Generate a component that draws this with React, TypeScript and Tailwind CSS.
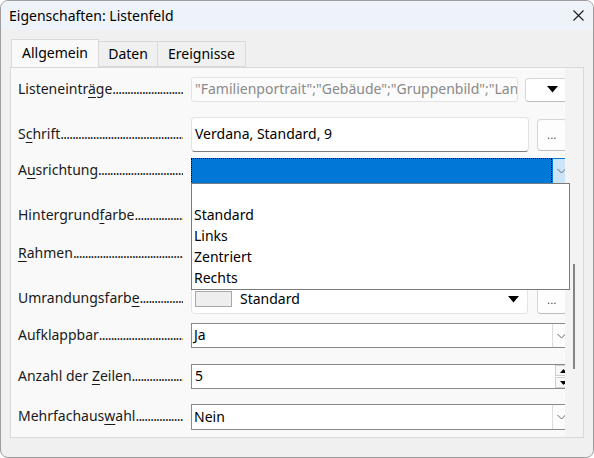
import type { ReactNode } from 'react';

const font = { fontFamily: '"Noto Sans", "Open Sans", sans-serif' };

function Leader({ children }: { children: ReactNode }) {
  return (
    <div className="flex w-[165px] shrink-0 items-center overflow-hidden whitespace-nowrap pb-[3px] text-[14px] leading-[19px] text-[#1a1a1a]">
      <span>{children}</span>
      <span className="min-w-0 flex-1 overflow-hidden tracking-[-0.8px]">{'.'.repeat(100)}</span>
    </div>
  );
}

function U({ children }: { children: ReactNode }) {
  return <span className="underline decoration-1 underline-offset-[3px]">{children}</span>;
}

function Chevron() {
  return (
    <svg width="9" height="6" viewBox="0 0 9 6">
      <path d="M0.5 1 L4.5 5 L8.5 1" fill="none" stroke="#6b6b6b" strokeWidth="1" />
    </svg>
  );
}

function Triangle() {
  return (
    <svg width="11" height="7" viewBox="0 0 11 7">
      <path d="M0 0 H11 L5.5 6.5 Z" fill="#000" />
    </svg>
  );
}

function Dots() {
  return <span className="text-[10px] leading-none tracking-[0.5px] text-[#333]">...</span>;
}

export default function App() {
  return (
    <div style={font} className="relative h-[458px] w-[594px] overflow-hidden bg-white">
      <div className="flex h-[458px] w-[594px] flex-col overflow-hidden rounded-[8px] border border-[#9e9e9e] bg-[#f0f0f0]">
        {/* Title bar */}
        <div className="flex h-[29px] shrink-0 items-center justify-between bg-[#eef3f9] pl-[8px] pr-[9px]">
          <span className="pb-[1px] text-[14px] text-black">Eigenschaften: Listenfeld</span>
          <svg width="11" height="11" viewBox="0 0 11 11">
            <path d="M0.5 0.5 L10.5 10.5 M10.5 0.5 L0.5 10.5" stroke="#1a1a1a" strokeWidth="1.1" />
          </svg>
        </div>

        {/* Tabs */}
        <div className="mt-[10px] flex h-[27px] shrink-0 items-end pl-[10px] text-[14px] text-black">
          <div className="relative z-10 flex h-[28px] w-[88px] items-center justify-center border border-b-0 border-[#d9d9d9] bg-[#f9f9f9] pb-[2px]">
            Allgemein
          </div>
          <div className="flex h-[26px] w-[59px] items-center justify-center border border-l-0 border-[#d9d9d9] bg-[#f0f0f0] pb-[1px]">
            Daten
          </div>
          <div className="flex h-[26px] w-[88px] items-center justify-center border border-l-0 border-[#d9d9d9] bg-[#f0f0f0] pb-[1px]">
            Ereignisse
          </div>
        </div>

        {/* Panel */}
        <div className="ml-[9px] flex h-[371px] w-[574px] shrink-0 border border-[#d9d9d9] bg-[#f9f9f9]">
          <div className="flex w-[554px] flex-col overflow-hidden pl-[7px] text-[14px] text-black">
            {/* Listeneinträge */}
            <div className="mt-[9px] flex h-[25px] items-center">
              <Leader>
                Listeneintr<U>ä</U>ge
              </Leader>
              <div className="ml-[8px] flex h-[25px] w-[327px] shrink-0 items-center overflow-hidden whitespace-nowrap rounded-[3px] border border-[#e3e3e3] bg-[#fbfbfb] pb-[2px] pl-[3px] text-[#8a8a8a]">
                "Familienportrait";"Gebäude";"Gruppenbild";"Landschaft"
              </div>
              <div className="ml-[7px] flex h-[24px] w-[55px] shrink-0 items-center justify-center rounded-[4px] border border-[#d6d6d6] border-b-[#bdbdbd] bg-white">
                <Triangle />
              </div>
            </div>

            {/* Schrift */}
            <div className="mt-[15px] flex h-[35px] items-center">
              <Leader>
                S<U>c</U>hrift
              </Leader>
              <div className="ml-[8px] flex h-[35px] w-[338px] shrink-0 items-center rounded-[4px] border border-[#e3e3e3] border-b-[#7f7f7f] bg-white pb-[2px] pl-[3px]">
                Verdana, Standard, 9
              </div>
              <div className="ml-[8px] flex h-[32px] w-[30px] shrink-0 items-center justify-center rounded-[4px] border border-[#d6d6d6] border-b-[#bdbdbd] bg-[#fdfdfd]">
                <Dots />
              </div>
            </div>

            {/* Ausrichtung */}
            <div className="mt-[6px] flex h-[26px] items-center">
              <Leader>
                A<U>u</U>srichtung
              </Leader>
              <div className="ml-[8px] flex h-[26px] w-[380px] shrink-0">
                <div className="h-[26px] w-[361px] bg-[#0078d7] outline-1 -outline-offset-1 outline-dotted outline-black" />
                <div className="flex h-[26px] w-[18px] items-center justify-center border border-[#0078d7] bg-[#cce4f7]">
                  <Chevron />
                </div>
              </div>
            </div>

            {/* Hintergrundfarbe (covered by popup) */}
            <div className="mt-[19px] flex h-[26px] items-center">
              <Leader>
                Hintergrund<U>f</U>arbe
              </Leader>
              <div className="ml-[8px] h-[26px] w-[337px] shrink-0 rounded-[4px] border border-[#e3e3e3] bg-white" />
            </div>

            {/* Rahmen (covered by popup) */}
            <div className="mt-[12px] flex h-[26px] items-center">
              <Leader>
                <U>R</U>ahmen
              </Leader>
              <div className="ml-[8px] h-[26px] w-[380px] shrink-0 border border-[#8a8a8a] bg-white" />
            </div>

            {/* Umrandungsfarbe */}
            <div className="mt-[17px] flex h-[30px] items-center">
              <Leader>
                Umrandungsfarb<U>e</U>
              </Leader>
              <div className="ml-[8px] flex h-[30px] w-[337px] shrink-0 items-center rounded-[4px] border border-[#e3e3e3] bg-white pl-[3px] pr-[8px]">
                <div className="h-[16px] w-[37px] border border-[#a8a8a8] bg-[#eeeeee]" />
                <span className="ml-[8px] flex-1 pb-[2px]">Standard</span>
                <Triangle />
              </div>
              <div className="ml-[9px] flex h-[29px] w-[30px] shrink-0 items-center justify-center self-end rounded-[4px] border border-[#d6d6d6] border-b-[#bdbdbd] bg-[#fdfdfd]">
                <Dots />
              </div>
            </div>

            {/* Aufklappbar */}
            <div className="mt-[9px] flex h-[25px] items-center">
              <Leader>Aufklappbar</Leader>
              <div className="ml-[8px] flex h-[25px] w-[380px] shrink-0 items-center border border-[#8a8a8a] bg-white pl-[2px]">
                <span className="flex-1 pb-[2px]">Ja</span>
                <div className="flex h-[23px] w-[18px] items-center justify-center border-l border-[#dcdcdc] bg-[#fcfcfc]">
                  <Chevron />
                </div>
              </div>
            </div>

            {/* Anzahl der Zeilen */}
            <div className="mt-[16px] flex h-[25px] items-center">
              <Leader>
                Anzahl der <U>Z</U>eilen
              </Leader>
              <div className="ml-[8px] flex h-[25px] w-[380px] shrink-0 items-center border-y border-l border-[#8a8a8a] bg-white pl-[3px]">
                <span className="flex-1 pb-[2px]">5</span>
                <div className="flex h-[23px] w-[16px] flex-col">
                  <div className="flex h-[11px] items-center justify-center border border-[#cfcfcf] bg-[#f7f7f7]">
                    <svg width="7" height="4" viewBox="0 0 7 4">
                      <path d="M0 4 H7 L3.5 0 Z" fill="#000" />
                    </svg>
                  </div>
                  <div className="mt-[1px] flex h-[11px] items-center justify-center border border-[#cfcfcf] bg-[#f7f7f7]">
                    <svg width="7" height="4" viewBox="0 0 7 4">
                      <path d="M0 0 H7 L3.5 4 Z" fill="#000" />
                    </svg>
                  </div>
                </div>
              </div>
            </div>

            {/* Mehrfachauswahl */}
            <div className="mt-[15px] flex h-[26px] items-center">
              <Leader>
                Mehrfachaus<U>w</U>ahl
              </Leader>
              <div className="ml-[8px] flex h-[26px] w-[380px] shrink-0 items-center border border-[#8a8a8a] bg-white pl-[2px]">
                <span className="flex-1 pb-[2px]">Nein</span>
                <div className="flex h-[24px] w-[18px] items-center justify-center border-l border-[#dcdcdc] bg-[#fcfcfc]">
                  <Chevron />
                </div>
              </div>
            </div>
          </div>

          {/* Scrollbar */}
          <div className="flex w-[18px] flex-col bg-[#f3f3f3] pl-[8px]">
            <div className="mt-[196px] h-[105px] w-[2px] bg-[#858585]" />
          </div>
        </div>
      </div>

      {/* Dropdown popup */}
      <div className="absolute left-[191px] top-[183px] flex h-[107px] w-[379px] flex-col border border-[#7a7a7a] bg-white text-[14px] text-black">
        <div className="h-[21px]" />
        <div className="flex h-[21px] items-center pb-[2px] pl-[2px]">Standard</div>
        <div className="flex h-[21px] items-center pb-[2px] pl-[2px]">Links</div>
        <div className="flex h-[21px] items-center pb-[2px] pl-[2px]">Zentriert</div>
        <div className="flex h-[21px] items-center pb-[2px] pl-[2px]">Rechts</div>
      </div>
    </div>
  );
}
